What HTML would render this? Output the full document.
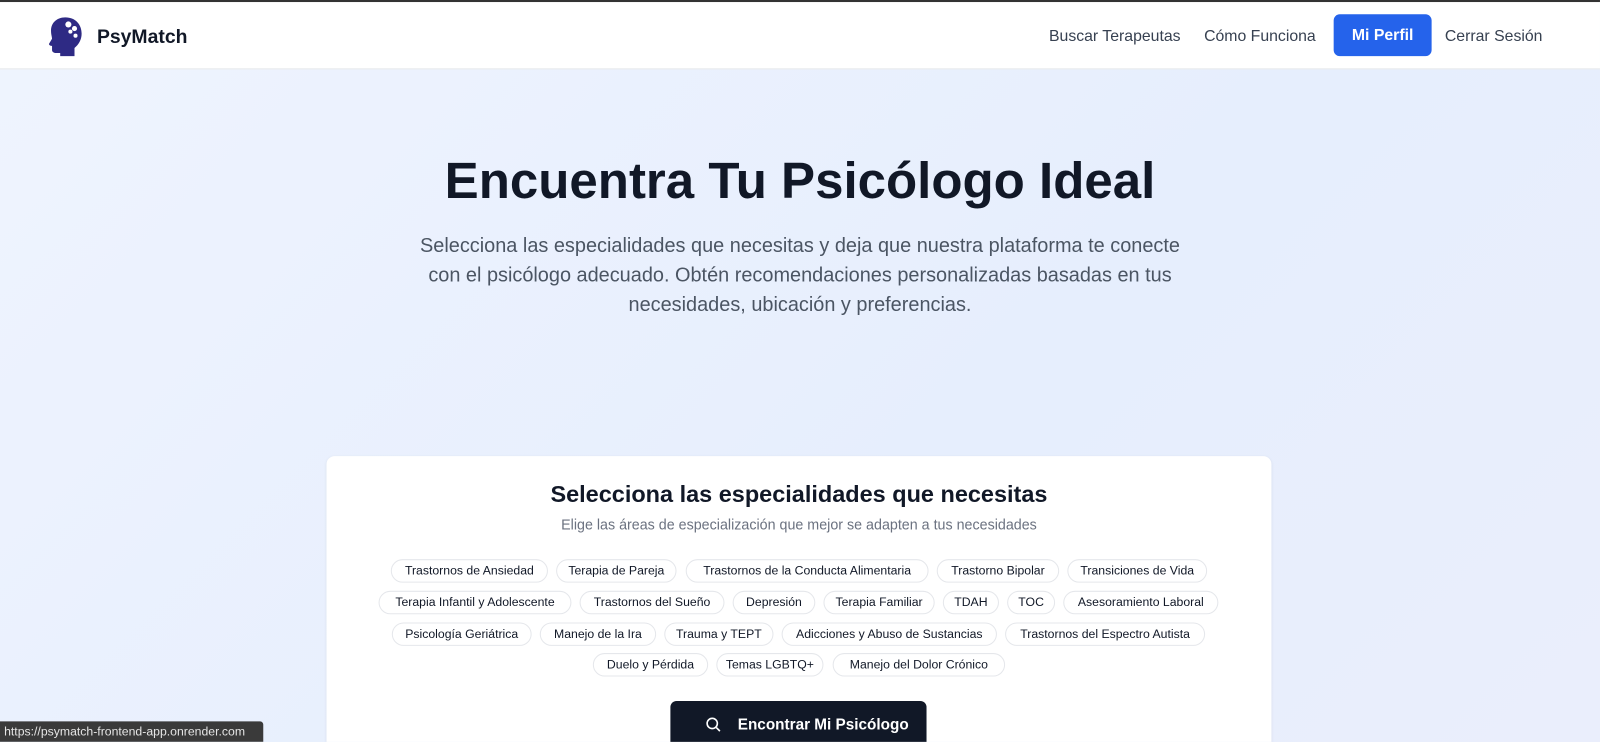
<!DOCTYPE html>
<html><head><meta charset="utf-8"><style>
*{box-sizing:border-box;margin:0;padding:0}
html,body{width:1600px;height:742px;overflow:hidden}
body{font-family:"Liberation Sans",sans-serif;background:linear-gradient(135deg,#eff4fe 0%,#e6eefd 60%,#eaeefc 100%)}
#w{position:relative;width:1568px;height:727px;overflow:hidden;transform:scale(1.0204);transform-origin:0 0}
.nav{position:absolute;left:0;top:0;width:1568px;height:68px;background:#fff;border-top:2px solid #333;border-bottom:1px solid #e5e7eb}
.logo{position:absolute;left:48px;top:14px}
.brand{position:absolute;left:95px;top:24px;font-weight:bold;font-size:19px;color:#111827}
.nl{position:absolute;top:25px;font-size:15.5px;color:#374151}
.btn{position:absolute;left:1307px;top:12px;width:96px;height:41px;background:#2563eb;border-radius:6px;color:#fff;font-weight:bold;font-size:15.5px;text-align:center;line-height:41px}
h1{position:absolute;top:148px;left:0;width:1568px;text-align:center;font-size:50px;color:#111827;font-weight:bold}
.sub{position:absolute;top:227px;left:401px;width:766px;text-align:center;font-size:19.5px;line-height:29px;color:#4b5563}
.card{position:absolute;left:320px;top:447px;width:926px;height:320px;background:#fff;border-radius:8px;box-shadow:0 1px 3px rgba(0,0,0,.08)}
.ct{position:absolute;top:471px;left:320px;width:926px;text-align:center;font-size:23px;font-weight:bold;color:#111827}
.cs{position:absolute;top:506px;left:320px;width:926px;text-align:center;font-size:14px;color:#6b7280}
.c{position:absolute;height:23px;border:1px solid #e5e7eb;border-radius:12px;font-size:12px;color:#111827;text-align:center;line-height:21px;white-space:nowrap;overflow:hidden}
.go{position:absolute;left:657px;top:687px;width:251px;height:50px;background:#111827;border-radius:6px;color:#fff;font-weight:bold;font-size:15px;display:flex;align-items:center;padding-left:66px;padding-bottom:4px}
.st{position:absolute;left:0;top:707px;width:258px;height:20px;background:#3a3a3a;color:#e5e5e5;font-size:12px;line-height:20px;padding-left:4px;border-top-right-radius:3px}
</style></head><body><div id="w">
<div class="nav">
<svg class="logo" width="34" height="40" viewBox="0 0 34 40"><path d="M16 1C7 1 2 7 2 14c0 4 1 6 1 8l-3 5c0 1 1 2 3 2v4c0 2 2 3 4 3h4v3h14v-8c4-3 7-8 7-14C32 8 26 1 16 1z" fill="#2e2a84"/><circle cx="19" cy="8" r="3" fill="#fff"/><circle cx="25" cy="12" r="2.5" fill="#fff"/><circle cx="21" cy="15" r="2" fill="#fff"/><circle cx="26" cy="19" r="2" fill="#fff"/></svg>
<div class="brand">PsyMatch</div>
<div class="nl" style="left:1028px">Buscar Terapeutas</div>
<div class="nl" style="left:1180px">Cómo Funciona</div>
<div class="btn">Mi Perfil</div>
<div class="nl" style="left:1416px">Cerrar Sesión</div>
</div>
<h1>Encuentra Tu Psicólogo Ideal</h1>
<div class="sub">Selecciona las especialidades que necesitas y deja que nuestra plataforma te conecte con el psicólogo adecuado. Obtén recomendaciones personalizadas basadas en tus necesidades, ubicación y preferencias.</div>
<div class="card"></div>
<div class="ct">Selecciona las especialidades que necesitas</div>
<div class="cs">Elige las áreas de especialización que mejor se adapten a tus necesidades</div>
<div class="c" style="left:383px;top:548px;width:154px">Trastornos de Ansiedad</div>
<div class="c" style="left:545px;top:548px;width:118px">Terapia de Pareja</div>
<div class="c" style="left:672px;top:548px;width:238px">Trastornos de la Conducta Alimentaria</div>
<div class="c" style="left:918px;top:548px;width:120px">Trastorno Bipolar</div>
<div class="c" style="left:1046px;top:548px;width:137px">Transiciones de Vida</div>
<div class="c" style="left:371px;top:579px;width:189px">Terapia Infantil y Adolescente</div>
<div class="c" style="left:568px;top:579px;width:142px">Trastornos del Sueño</div>
<div class="c" style="left:718px;top:579px;width:81px">Depresión</div>
<div class="c" style="left:807px;top:579px;width:109px">Terapia Familiar</div>
<div class="c" style="left:924px;top:579px;width:55px">TDAH</div>
<div class="c" style="left:987px;top:579px;width:47px">TOC</div>
<div class="c" style="left:1042px;top:579px;width:152px">Asesoramiento Laboral</div>
<div class="c" style="left:384px;top:610px;width:137px">Psicología Geriátrica</div>
<div class="c" style="left:529px;top:610px;width:114px">Manejo de la Ira</div>
<div class="c" style="left:651px;top:610px;width:107px">Trauma y TEPT</div>
<div class="c" style="left:766px;top:610px;width:211px">Adicciones y Abuso de Sustancias</div>
<div class="c" style="left:985px;top:610px;width:196px">Trastornos del Espectro Autista</div>
<div class="c" style="left:581px;top:640px;width:113px">Duelo y Pérdida</div>
<div class="c" style="left:702px;top:640px;width:105px">Temas LGBTQ+</div>
<div class="c" style="left:816px;top:640px;width:169px">Manejo del Dolor Crónico</div>
<div class="go"><svg style="position:absolute;left:34px;top:15px" width="16" height="16" viewBox="0 0 16 16" fill="none" stroke="#fff" stroke-width="1.6"><circle cx="7" cy="7" r="5"/><path d="M11 11l3.5 3.5"/></svg>Encontrar Mi Psicólogo</div>
<div class="st">https://psymatch-frontend-app.onrender.com</div>
</div></body></html>
